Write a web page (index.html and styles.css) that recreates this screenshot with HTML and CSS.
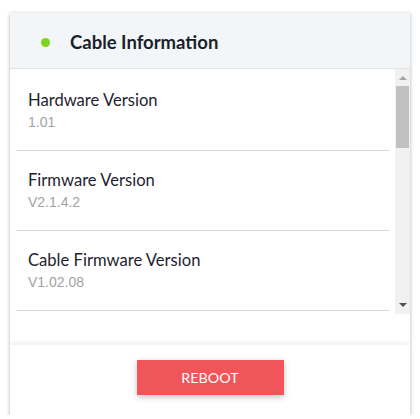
FILE: index.html
```html
<!DOCTYPE html>
<html>
<head>
<meta charset="utf-8">
<link rel="stylesheet" href="styles.css">
</head>
<body>
<div class="card">
  <div class="card-header">
    <span class="status-dot"></span>
    <h2 class="card-title">Cable Information</h2>
  </div>
  <div class="info-pane">
    <div class="info-list">
      <div class="info-row"><div class="info-label">Hardware Version</div><div class="info-value">1.01</div></div>
      <div class="info-row"><div class="info-label">Firmware Version</div><div class="info-value">V2.1.4.2</div></div>
      <div class="info-row"><div class="info-label">Cable Firmware Version</div><div class="info-value">V1.02.08</div></div>
    </div>
    <div class="scrollbar" aria-hidden="true">
      <div class="sb-btn sb-up"><span class="tri-up"></span></div>
      <div class="sb-track"><div class="sb-thumb"></div></div>
      <div class="sb-btn sb-down"><span class="tri-down"></span></div>
    </div>
  </div>
  <div class="card-spacer"></div>
  <div class="card-footer">
    <button class="btn-reboot">REBOOT</button>
  </div>
</div>
</body>
</html>
```
FILE: styles.css
```css
html, body {
  margin: 0;
  padding: 0;
  background: #ffffff;
}
body {
  padding: 13px 10px 0;
  font-family: Lato, "Open Sans", sans-serif;
}
.card {
  width: 400px;
  height: 402px;
  box-sizing: border-box;
  background: #ffffff;
  box-shadow: 0 1px 4px rgba(0, 0, 0, 0.3);
  display: flex;
  flex-direction: column;
  overflow: hidden;
}
.card-header {
  height: 56px;
  flex: none;
  box-sizing: border-box;
  background: #f3f6f8;
  border-bottom: 1px solid #dfe3e6;
  display: flex;
  align-items: center;
  padding-left: 31px;
  padding-top: 3px;
}
.status-dot {
  width: 9px;
  height: 9px;
  border-radius: 50%;
  background: #7ed321;
  flex: none;
}
.card-title {
  margin: 0 0 0 20px;
  font-family: Lato, sans-serif;
  font-weight: 700;
  font-size: 18.5px;
  color: #1b1f2a;
}
.info-pane {
  height: 245px;
  flex: none;
  display: flex;
}
.info-list {
  flex: 1;
  min-width: 0;
  overflow: hidden;
  padding-top: 2px;
}
.scrollbar {
  width: 15px;
  flex: none;
  display: flex;
  flex-direction: column;
  background: #f1f1f1;
}
.sb-btn {
  height: 17px;
  flex: none;
  display: flex;
  align-items: center;
  justify-content: center;
}
.tri-up {
  width: 0;
  height: 0;
  border-left: 4px solid transparent;
  border-right: 4px solid transparent;
  border-bottom: 4px solid #a3a3a3;
}
.tri-down {
  width: 0;
  height: 0;
  border-left: 4px solid transparent;
  border-right: 4px solid transparent;
  border-top: 4px solid #505050;
  margin-top: -1px;
}
.sb-track {
  flex: 1;
  padding: 0 1px;
}
.sb-thumb {
  height: 62px;
  background: #c1c1c1;
}
.info-row {
  margin: 0 6px 0 7px;
  padding: 19px 11px 18px;
  border-bottom: 1px solid #d6d6d6;
}
.info-label {
  font-family: Lato, sans-serif;
  font-size: 16.6px;
  line-height: 20px;
  color: #1f2330;
}
.info-value {
  margin-top: 2px;
  font-family: "Liberation Sans", Arial, sans-serif;
  font-size: 14px;
  line-height: 20px;
  color: #a3a3a3;
}
.card-spacer {
  height: 31px;
  flex: none;
}
.card-footer {
  flex: 1;
  display: flex;
  justify-content: center;
  align-items: flex-start;
  padding-top: 15px;
  box-shadow: 0 -2px 5px rgba(0, 0, 0, 0.07);
  position: relative;
}
.btn-reboot {
  width: 147px;
  height: 35px;
  border: none;
  background: #f05659;
  color: #ffffff;
  font-family: Lato, sans-serif;
  font-size: 14.3px;
  box-shadow: 0 2px 6px rgba(0, 0, 0, 0.25);
  padding: 0;
}
```
